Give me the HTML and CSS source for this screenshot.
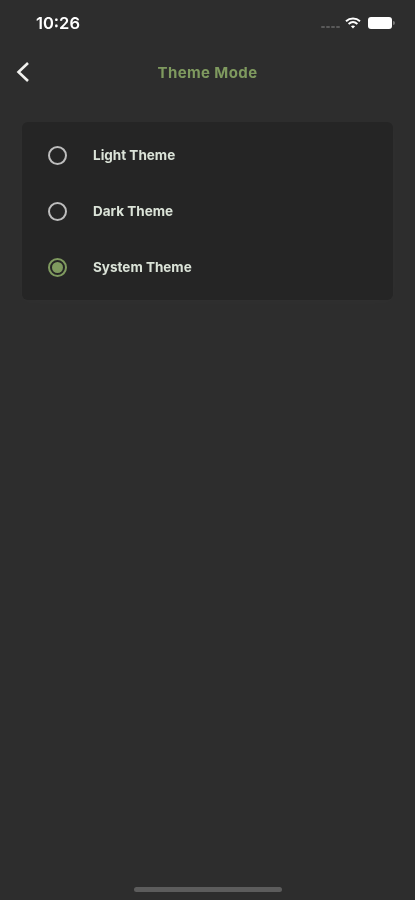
FILE: index.html
```html
<!DOCTYPE html>
<html lang="en">
<head>
    <meta charset="UTF-8">
    <meta name="viewport" content="width=device-width, initial-scale=1.0">
    <title>Theme Mode</title>
    <link rel="stylesheet" href="styles.css">
</head>
<body>
    <div class="screen">
        <div class="status-bar">
            <span class="clock">10:26</span>
            <div class="status-icons">
                <div class="signal">
                    <span></span><span></span><span></span><span></span>
                </div>
                <svg class="wifi" width="16" height="12" viewBox="0 0 16 12">
                    <path d="M1 4.2C5 .6 11 .6 15 4.2" fill="none" stroke="#fff" stroke-width="2"/>
                    <path d="M3.6 6.9C6.2 4.7 9.8 4.7 12.4 6.9" fill="none" stroke="#fff" stroke-width="2"/>
                    <path d="M5.9 9.2 8 11.5l2.1-2.3C8.9 8.2 7.1 8.2 5.9 9.2z" fill="#fff"/>
                </svg>
                <div class="battery"></div>
                <div class="battery-tip"></div>
            </div>
        </div>
        <div class="header">
            <svg class="back" width="16" height="22" viewBox="0 0 16 22">
                <path d="M13 2 3.5 11l9.5 9" fill="none" stroke="#f1f1ee" stroke-width="2.6"/>
            </svg>
            <h1>Theme Mode</h1>
        </div>
        <div class="card">
            <div class="option">
                <span class="radio"></span>
                <span class="label">Light Theme</span>
            </div>
            <div class="option">
                <span class="radio"></span>
                <span class="label">Dark Theme</span>
            </div>
            <div class="option">
                <span class="radio selected"></span>
                <span class="label">System Theme</span>
            </div>
        </div>
        <div class="home-bar"></div>
    </div>
</body>
</html>
```

FILE: styles.css
```css
* {
    margin: 0;
    padding: 0;
    box-sizing: border-box;
}
body {
    background-color: #2d2d2d;
    font-family: Inter, "Liberation Sans", sans-serif;
}
.screen {
    width: 415px;
    height: 900px;
    display: flex;
    flex-direction: column;
    filter: blur(0.5px);
}
.status-bar {
    height: 46px;
    padding: 0 20px 0 36px;
    display: flex;
    justify-content: space-between;
    align-items: center;
}
.clock {
    color: #fff;
    font-size: 16.5px;
    font-weight: 600;
}
.status-icons {
    display: flex;
    align-items: center;
}
.signal {
    display: flex;
    gap: 1px;
    margin-right: 5px;
    margin-top: 7px;
}
.signal span {
    width: 4px;
    height: 2px;
    background-color: #5a5a5a;
    border-radius: 1px;
}
.wifi {
    margin-right: 7px;
}
.battery {
    width: 24px;
    height: 12px;
    background-color: #fff;
    border-radius: 3px;
}
.battery-tip {
    width: 2px;
    height: 4px;
    margin-left: 1px;
    background-color: #777;
    border-radius: 0 2px 2px 0;
}
.header {
    height: 52px;
    padding-left: 15px;
    display: flex;
    align-items: center;
    position: relative;
}
.header h1 {
    position: absolute;
    left: 0;
    right: 0;
    text-align: center;
    color: #7f9a5f;
    font-size: 15px;
    font-weight: 700;
    letter-spacing: 0.4px;
}
.card {
    width: 371px;
    height: 178px;
    margin: 24px 0 0 22px;
    padding: 5px 0;
    background-color: #252525;
    border-radius: 6px;
    box-shadow: 0 2px 12px rgba(255, 255, 255, 0.02);
}
.option {
    height: 56px;
    padding-left: 26px;
    display: flex;
    align-items: center;
    gap: 26px;
}
.radio {
    width: 19px;
    height: 19px;
    border: 2px solid #bdbdbd;
    border-radius: 50%;
    display: flex;
    align-items: center;
    justify-content: center;
}
.radio.selected {
    border-color: #7f9a5f;
}
.radio.selected::after {
    content: "";
    width: 11px;
    height: 11px;
    background-color: #7f9a5f;
    border-radius: 50%;
}
.label {
    color: #dbe3d8;
    font-size: 13.5px;
    font-weight: 700;
}
.home-bar {
    width: 148px;
    height: 5px;
    margin: auto auto 8px;
    background-color: #5c5c5c;
    border-radius: 3px;
}
```
